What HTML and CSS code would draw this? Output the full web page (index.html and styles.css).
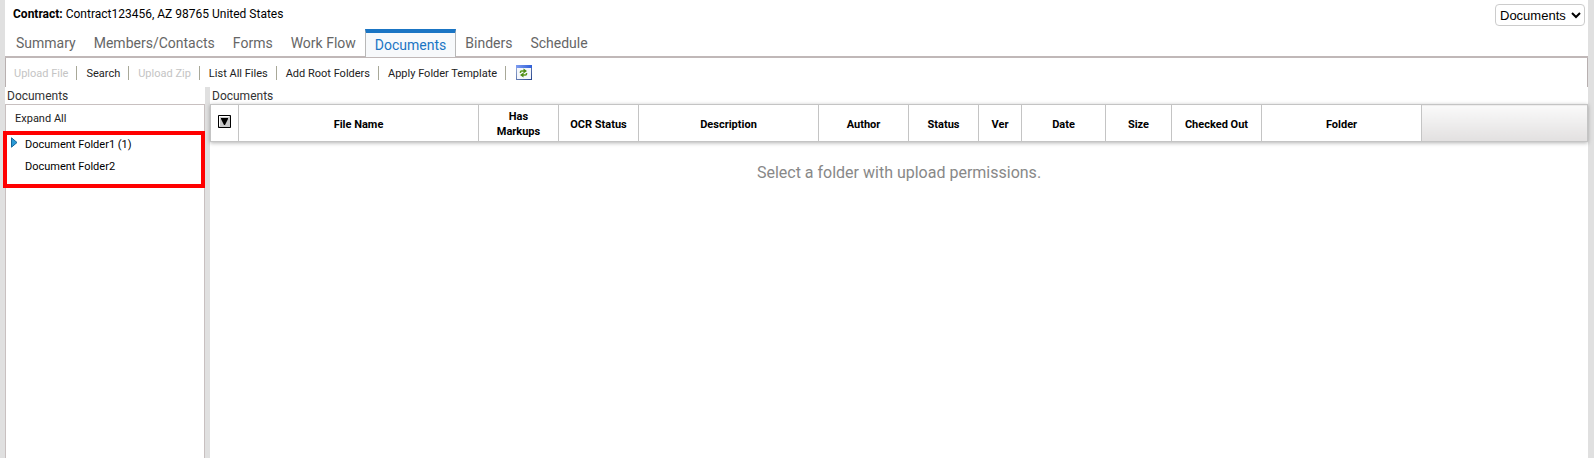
FILE: index.html
```html
<!DOCTYPE html>
<html lang="en">
<head>
<meta charset="utf-8">
<title>Contract Documents</title>
<link rel="stylesheet" href="styles.css">
</head>
<body>
<div class="page">
  <header class="header">
    <p class="contract"><strong>Contract:</strong> Contract123456, AZ 98765 United States</p>
    <select class="module" aria-label="Module"><option>Documents</option></select>
  </header>
  <nav class="tabs">
    <a class="tab" href="#">Summary</a>
    <a class="tab" href="#">Members/Contacts</a>
    <a class="tab" href="#">Forms</a>
    <a class="tab" href="#">Work Flow</a>
    <a class="tab tab-active" href="#" aria-current="page">Documents</a>
    <a class="tab" href="#">Binders</a>
    <a class="tab" href="#">Schedule</a>
  </nav>
  <div class="toolbar">
    <button class="tool" disabled>Upload File</button>
    <button class="tool">Search</button>
    <button class="tool" disabled>Upload Zip</button>
    <button class="tool">List All Files</button>
    <button class="tool">Add Root Folders</button>
    <button class="tool">Apply Folder Template</button>
    <button class="refresh" aria-label="Refresh">
      <svg width="16" height="15" viewBox="0 0 16 15">
        <defs><linearGradient id="bar"><stop offset="0" stop-color="#7e9cf0"/><stop offset="1" stop-color="#2e5fd8"/></linearGradient>
        <linearGradient id="edge" x2="1" y2="1"><stop offset="0" stop-color="#9fb2d8"/><stop offset="1" stop-color="#26448c"/></linearGradient></defs>
        <path fill="url(#edge)" d="M0 0h16v15H0z"/>
        <path fill="#f4f6fb" d="M1 3h14v11H1z"/>
        <path fill="url(#bar)" d="M0 0h16v3H0z"/>
        <path fill="none" stroke="#5a9a1c" stroke-width="1.500" d="M4.500 8V7q0-1 1-1H8M10.500 8v1q0 1-1 1H7"/>
        <path fill="#4c8a14" d="M7.500 3.500l3.500 2.500-3.500 2.500zM7.500 12.500L4 10l3.500-2.500z"/>
      </svg>
    </button>
  </div>
  <main class="panes">
    <section class="pane pane-tree">
      <h2 class="pane-title">Documents</h2>
      <div class="tree">
        <button class="expand">Expand All</button>
        <ul class="folders">
          <li><a class="folder" href="#"><svg class="arrow" width="7" height="11" viewBox="0 0 7 11"><path fill="#2a9ad6" stroke="#14689c" d="M.5.8 6 5.500.5 10.200z"/></svg>Document Folder1 (1)</a></li>
          <li><a class="folder" href="#">Document Folder2</a></li>
        </ul>
      </div>
    </section>
    <section class="pane pane-files">
      <h2 class="pane-title">Documents</h2>
      <table class="files">
        <colgroup><col class="c-pick"><col class="c-name"><col class="c-mark"><col class="c-mark"><col class="c-desc"><col class="c-author"><col class="c-status"><col class="c-ver"><col class="c-date"><col class="c-size"><col class="c-author"><col class="c-folder"><col></colgroup>
        <thead>
          <tr>
            <th class="pick"><button class="picker" aria-label="Selection menu"><svg width="13" height="13" viewBox="0 0 13 13"><path fill="#c8c8c8" d="M0 0h13v13H0z"/><path fill="#fff" d="M1 1h10v1H2v9H1z"/><path fill="none" stroke="#000" d="M.5.5h12v12H.5z"/><path d="M3 3h7v1L7 10H6L3 4z"/></svg></button></th>
            <th>File Name</th><th>Has<br>Markups</th><th>OCR Status</th><th>Description</th><th>Author</th><th>Status</th><th>Ver</th><th>Date</th><th>Size</th><th>Checked Out</th><th>Folder</th><th class="rest"></th>
          </tr>
        </thead>
      </table>
      <p class="empty">Select a folder with upload permissions.</p>
    </section>
  </main>
</div>
</body>
</html>
```
FILE: styles.css
```css
* { box-sizing: border-box; }
body { margin: 0; font: 12px/15px Roboto, "Open Sans", sans-serif; color: #000; background: #fff; }
button { font: inherit; color: inherit; margin: 0; padding: 0; border: 0; background: none; }
a { color: inherit; text-decoration: none; }
.page { display: flex; flex-direction: column; min-height: 100vh; border: solid #e0e0e0; border-width: 0 6px 0 5px; }
.header { display: flex; justify-content: space-between; align-items: flex-start; height: 29px; padding: 4px 3px 0 8px; }
.contract { margin: 0; line-height: 20px; }
.module { width: 90px; height: 22px; border: 1px solid #ccc; border-radius: 4px; background: #fff; font: 13px "Liberation Sans", Arial, sans-serif; }
.tabs { display: flex; height: 29px; padding-left: 2px; border-bottom: 2px solid #c0b8b8; font-size: 14px; line-height: 28px; color: #666; }
.tab { padding: 0 9px; height: 29px; }
.tab-active { height: 28px; border: solid #b8b8b8; border-width: 0 1px; border-top: 4px solid #1a75c4; background: #f7f9fb; color: #1a75c4; line-height: 24px; }
.toolbar { display: flex; align-items: center; height: 29px; border: solid #b8b0b0; border-width: 0 1px; font-size: 11px; padding-left: 8px; color: #222; }
.tool { height: 14px; padding-top: 2px; line-height: 12px; margin-right: 9px; padding-right: 8px; border-right: 1px solid #a8a898; }
.tool:disabled { color: #c4c4c4; }
.refresh { height: 15px; margin-left: 1px; line-height: 0; }
.refresh svg, .picker svg { display: block; }
.panes { display: flex; flex: 1; }
.pane { display: flex; flex-direction: column; }
.pane-tree { flex: 0 0 205px; border-right: 5px solid #e0e0e0; }
.pane-files { flex: 1; min-width: 0; }
.pane-title { margin: 0; padding: 2px 0 0 2px; font-size: 12px; font-weight: 400; line-height: 15px; color: #333; }
.tree { flex: 1; border: 1px solid #c8c0c0; border-bottom: 0; font-size: 11px; }
.expand { padding: 2px 9px 0; line-height: 24px; color: #222; }
.folders { list-style: none; margin: 0 -1px 0 -3px; padding: 0 0 5px 18px; border: 4px solid #f00; line-height: 24px; }
.folders li:first-child { line-height: 20px; }
.folder { position: relative; display: block; }
.arrow { position: absolute; left: -14px; top: 2px; }
.files { width: 100%; height: 38px; table-layout: fixed; border-collapse: collapse; box-shadow: 0 1px 4px rgba(0,0,0,.3); font-size: 11px; }
.files th { padding: 2px 0 0; border: 1px solid #c4c4c4; background: #fff; line-height: 15px; }
.files .rest { background: linear-gradient(#fafafa, #e2e0e0); }
.picker { display: block; margin: 0 auto 6px; }
.c-pick { width: 28px; } .c-name { width: 240px; } .c-mark { width: 80px; } .c-desc { width: 180px; } .c-author { width: 90px; } .c-status { width: 70px; } .c-ver { width: 43px; } .c-date { width: 84px; } .c-size { width: 66px; } .c-folder { width: 160px; }
.empty { margin: 19px 0 0; text-align: center; font-size: 16px; line-height: 24px; color: #888; }
```
